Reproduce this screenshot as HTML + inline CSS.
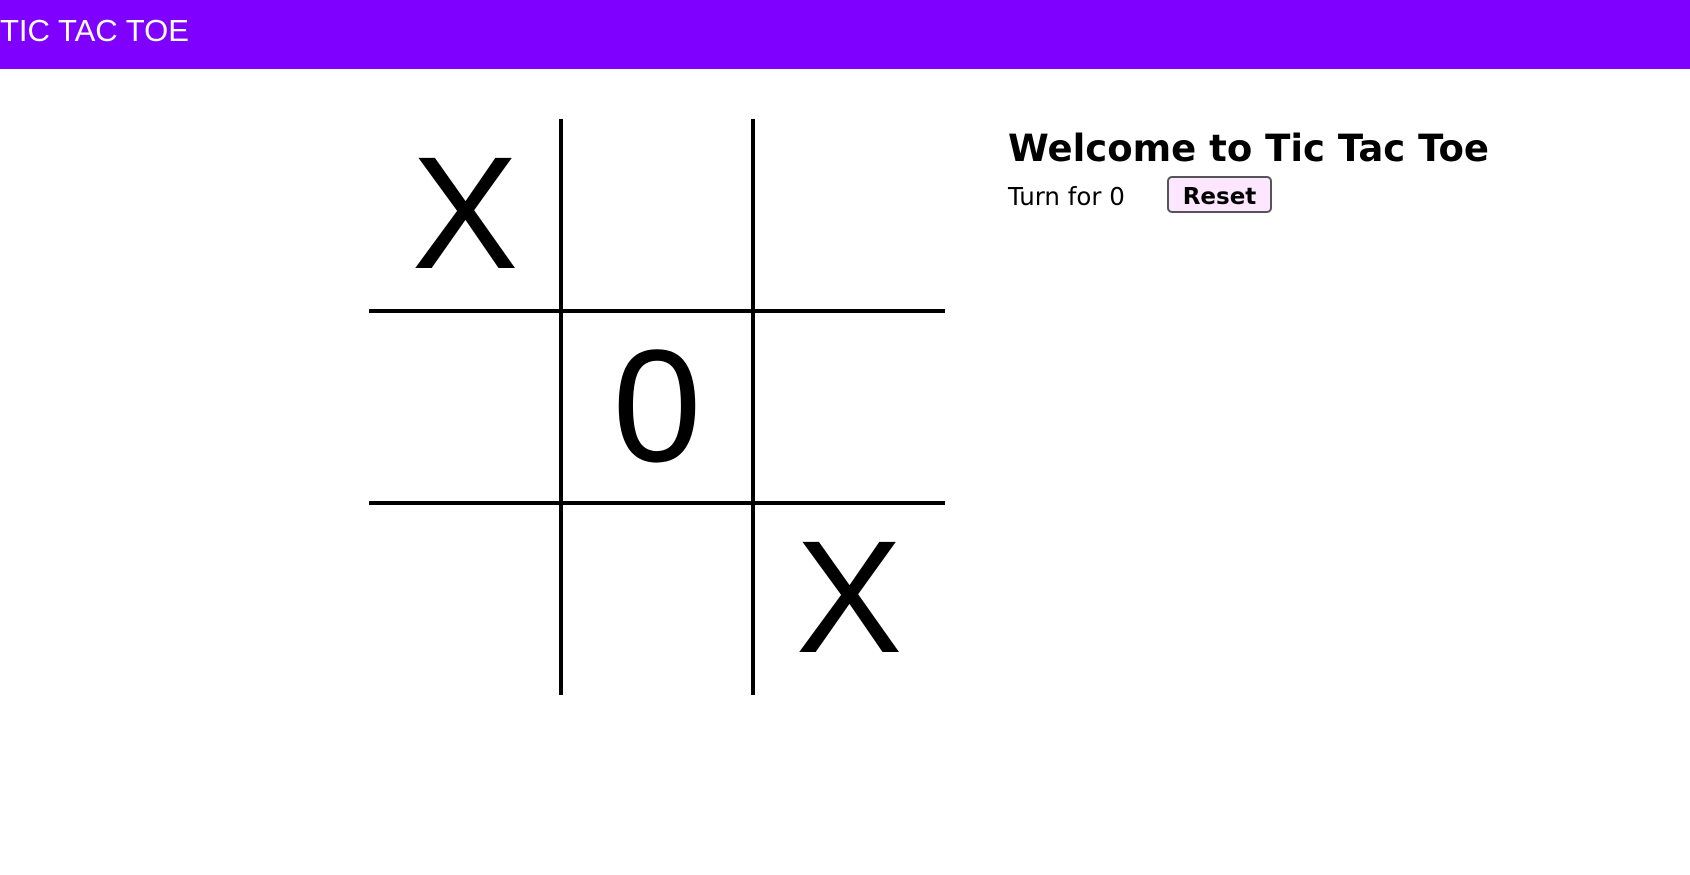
<!DOCTYPE html>
<html><head><style>
*{margin:0;padding:0;box-sizing:border-box}
body{width:1690px;height:875px;background:#fff;position:relative;overflow:hidden;font-family:"Liberation Sans",Arial,sans-serif}
.nav{position:absolute;left:0;top:0;width:1690px;height:69px;background:#8000ff;color:#fff;font-size:31px;line-height:62px;padding-left:0}
.cell{position:absolute;width:192px;height:192px;font-size:160px;line-height:192px;text-align:center;color:#000;font-family:"Liberation Sans",Arial,sans-serif}
.v{position:absolute;width:4px;background:#000;top:119px;height:576px}
.h{position:absolute;height:4px;background:#000;left:369px;width:576px}
.info{position:absolute;left:1008px;top:124px;font-family:"Comic Sans MS","DejaVu Sans",cursive,sans-serif}
h1{font-size:37px;font-weight:bold;line-height:50px;letter-spacing:0px}
.turn{position:absolute;left:1008px;top:182px;font-size:24.5px;font-family:"Comic Sans MS","DejaVu Sans",sans-serif}
.btn{position:absolute;left:1167px;top:176px;width:105px;height:37px;background:#fde6ff;border:2px solid #555;border-radius:5px;font-weight:bold;font-size:23px;text-align:center;line-height:39px;font-family:"Comic Sans MS","DejaVu Sans",sans-serif}
</style></head><body>
<div class="nav">TIC TAC TOE</div>
<div class="v" style="left:559px"></div>
<div class="v" style="left:751px"></div>
<div class="h" style="top:309px"></div>
<div class="h" style="top:501px"></div>
<div class="cell" style="left:369px;top:117px">X</div>
<div class="cell" style="left:561px;top:310px">0</div>
<div class="cell" style="left:753px;top:501px">X</div>
<div class="info"><h1>Welcome to Tic Tac Toe</h1></div>
<div class="turn">Turn for 0</div>
<div class="btn">Reset</div>
</body></html>
